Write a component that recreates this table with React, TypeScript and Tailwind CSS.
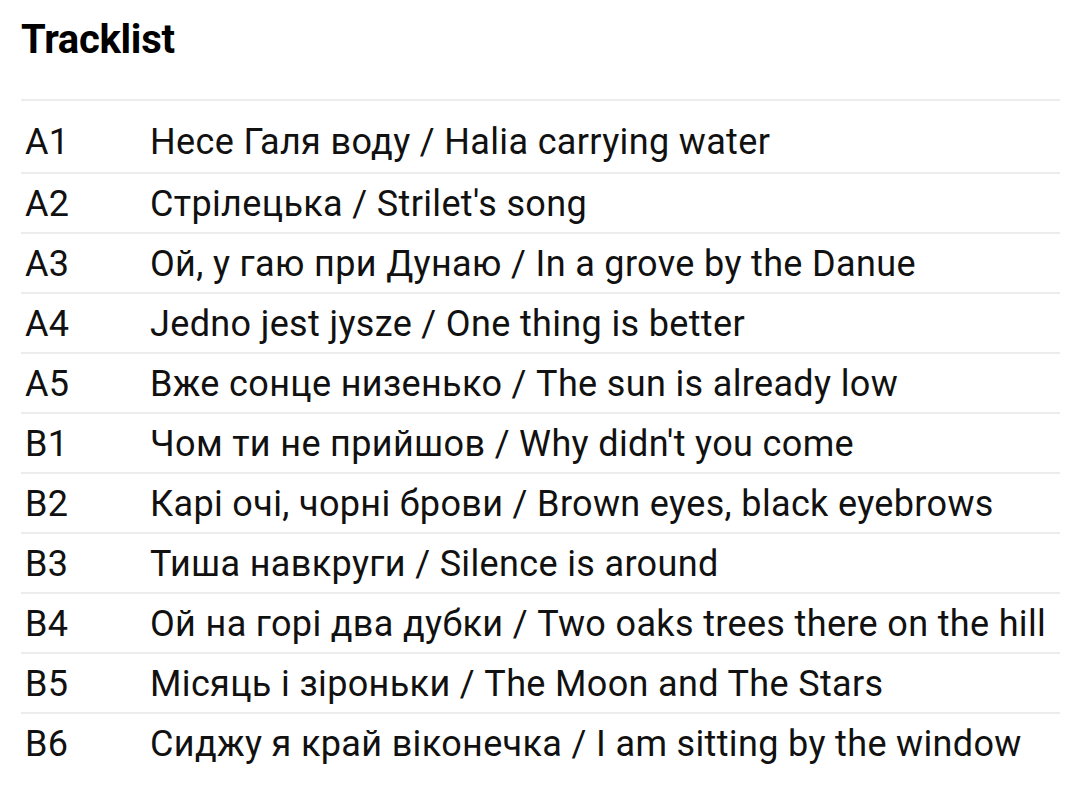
import React from 'react'

const tracks: [string, string][] = [
  ['A1', 'Несе Галя воду / Halia carrying water'],
  ['A2', "Стрілецька / Strilet's song"],
  ['A3', 'Ой, у гаю при Дунаю / In a grove by the Danue'],
  ['A4', 'Jedno jest jysze / One thing is better'],
  ['A5', 'Вже сонце низенько / The sun is already low'],
  ['B1', "Чом ти не прийшов / Why didn't you come"],
  ['B2', 'Карі очі, чорні брови / Brown eyes, black eyebrows'],
  ['B3', 'Тиша навкруги / Silence is around'],
  ['B4', 'Ой на горі два дубки / Two oaks trees there on the hill'],
  ['B5', 'Місяць і зіроньки / The Moon and The Stars'],
  ['B6', 'Сиджу я край віконечка / I am sitting by the window'],
]

const App = () => {
  return (
    <div
      className="w-[1080px] h-[786px] bg-white text-[#111] overflow-hidden"
      style={{ fontFamily: 'Roboto, "Noto Sans", sans-serif' }}
    >
      <div className="ml-[21px] mr-[20px]">
        {/* Heading */}
        <h2 className="pt-[20px] pb-[39px] text-[40px] leading-none font-bold text-black tracking-[-0.3px]">
          Tracklist
        </h2>

        {/* Rows */}
        <div className="border-t-2 border-[#ececec] pt-[11px]">
          {tracks.map(([pos, title], i) => (
            <div
              key={pos}
              className={`flex h-[60px] pt-[2px] items-start text-[36px] leading-[56px] tracking-[0.35px] ${
                i > 0 ? 'border-t-2 border-[#ececec]' : ''
              }`}
            >
              <span className="w-[129px] pl-[4px] shrink-0">{pos}</span>
              <span className="whitespace-nowrap">{title}</span>
            </div>
          ))}
        </div>
      </div>
    </div>
  )
}

export default App
